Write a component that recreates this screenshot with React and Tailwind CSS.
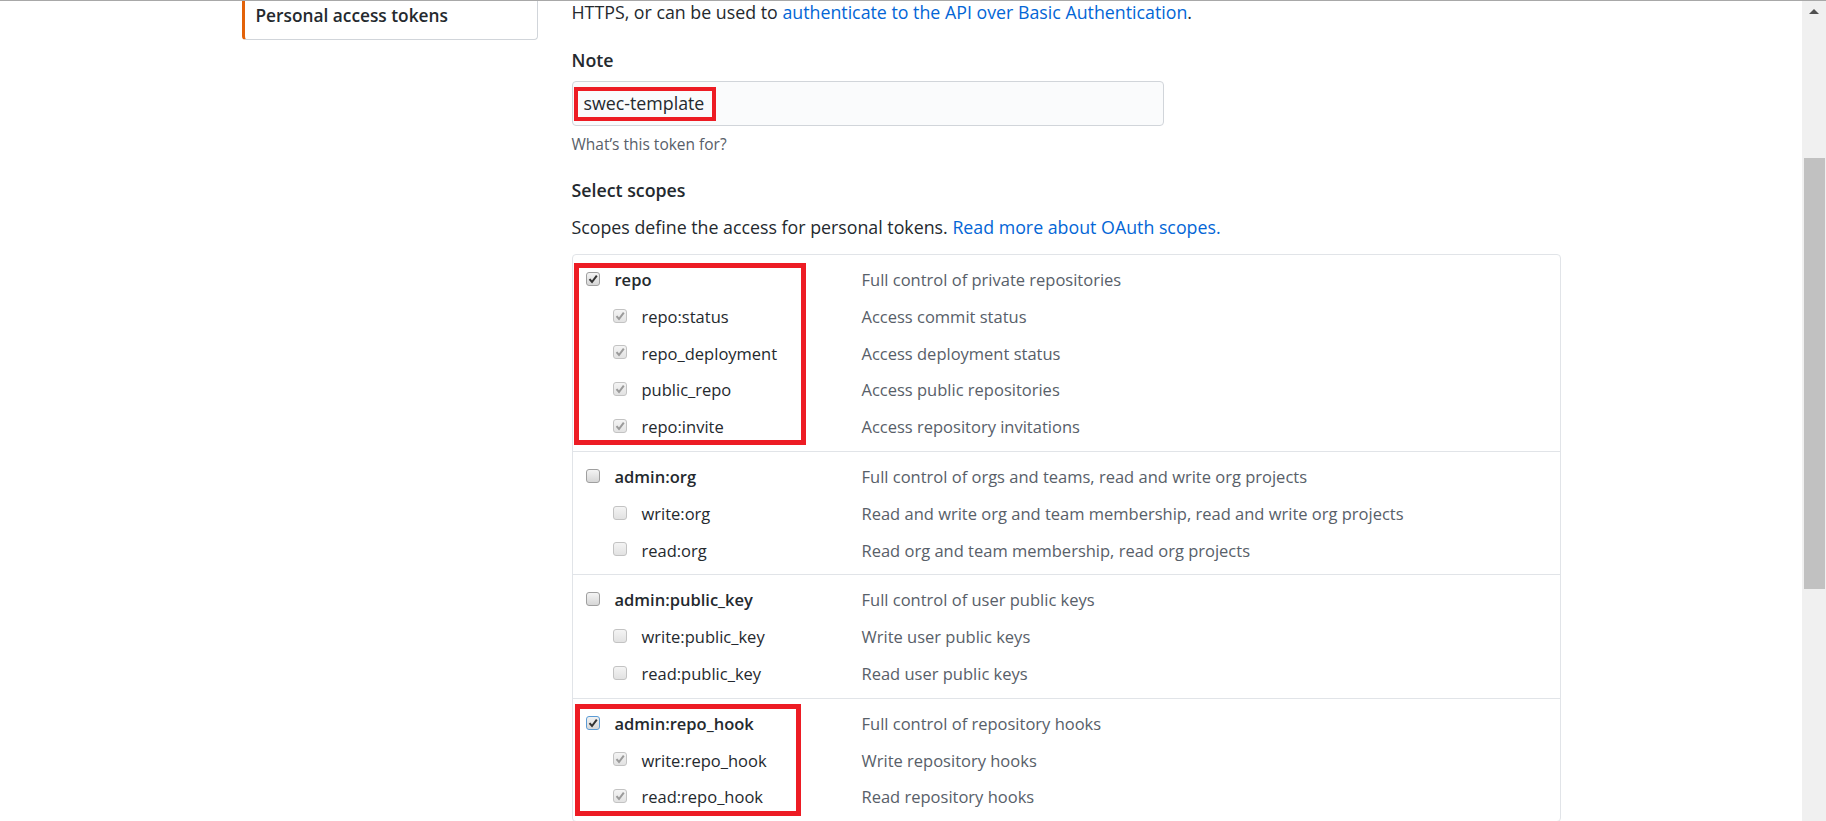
import React from "react";

const groups = [
  {
    checked: true,
    focus: false,
    mark: "top-[8px] left-[1px] w-[232px] h-[182px]",
    parent: { name: "repo", desc: "Full control of private repositories" },
    children: [
      { name: "repo:status", desc: "Access commit status" },
      { name: "repo_deployment", desc: "Access deployment status" },
      { name: "public_repo", desc: "Access public repositories" },
      { name: "repo:invite", desc: "Access repository invitations" },
    ],
  },
  {
    checked: false,
    parent: {
      name: "admin:org",
      desc: "Full control of orgs and teams, read and write org projects",
    },
    children: [
      {
        name: "write:org",
        desc: "Read and write org and team membership, read and write org projects",
      },
      { name: "read:org", desc: "Read org and team membership, read org projects" },
    ],
  },
  {
    checked: false,
    parent: { name: "admin:public_key", desc: "Full control of user public keys" },
    children: [
      { name: "write:public_key", desc: "Write user public keys" },
      { name: "read:public_key", desc: "Read user public keys" },
    ],
  },
  {
    checked: true,
    focus: true,
    mark: "top-[5px] left-[2px] w-[226px] h-[112px]",
    parent: { name: "admin:repo_hook", desc: "Full control of repository hooks" },
    children: [
      { name: "write:repo_hook", desc: "Write repository hooks" },
      { name: "read:repo_hook", desc: "Read repository hooks" },
    ],
  },
];

function Checkbox({ checked, disabled, focus }) {
  return (
    <span
      className={
        "mb-[3px] flex h-[14px] w-[14px] shrink-0 items-center justify-center rounded-[3px] border " +
        (focus
          ? "border-[#5b9bd5] bg-gradient-to-b from-[#f2f2f2] to-[#d8d8d8]"
          : disabled
          ? "border-[#c3c3c3] bg-gradient-to-b from-[#f4f4f4] to-[#e2e2e2]"
          : "border-[#9f9f9f] bg-gradient-to-b from-[#f4f4f4] to-[#d6d6d6]")
      }
    >
      {checked && (
        <svg width="12" height="12" viewBox="0 0 12 12">
          <polyline
            points="2.5,6.2 5,9 9.8,2.6"
            fill="none"
            stroke={disabled ? "#9a9a9a" : "#333"}
            strokeWidth="2"
          />
        </svg>
      )}
    </span>
  );
}

function ScopeRow({ item, child, checked }) {
  return (
    <div className="flex h-[36.8px] items-center">
      <div
        className={
          "flex w-[289px] shrink-0 items-center gap-[15px] " +
          (child ? "pl-[40px]" : "pl-[13px]")
        }
      >
        <Checkbox checked={checked} disabled={child} focus={!child && item.focus} />
        <span className={child ? "text-[#24292e]" : "font-semibold text-[#24292e]"}>
          {item.name}
        </span>
      </div>
      <span className="text-[#586069]">{item.desc}</span>
    </div>
  );
}

export default function App() {
  return (
    <div className="flex h-[821px] overflow-hidden border-t border-[#a8a8a8] bg-white font-['Open_Sans',sans-serif] text-[16.5px] text-[#24292e]">
      <div className="flex-1">
        <div className="mx-auto flex w-[1319px] gap-[34px]">
          {/* settings menu */}
          <div className="w-[296px] shrink-0">
            <div className="h-[39px] rounded-b-[4px] border border-t-0 border-l-[3px] border-[#d1d5da] border-l-[#e36209] pl-[11px] pt-[3px]">
              <span className="text-[17.3px] font-semibold leading-[24px] text-[#24292e]">
                Personal access tokens
              </span>
            </div>
          </div>

          {/* form */}
          <div className="flex-1 text-[17.8px]">
            <p className="-mt-px leading-[24px]">
              HTTPS, or can be used to{" "}
              <a className="text-[#0366d6]">
                authenticate to the API over Basic Authentication
              </a>
              .
            </p>

            <div className="mt-[24px] font-semibold leading-[24px]">Note</div>
            <div className="relative mt-[9px] flex h-[45px] w-[592px] items-center rounded-[4px] border border-[#d1d5da] bg-[#fafbfc] pl-[11px]">
              swec-template
              <div className="absolute left-[1px] top-[5px] h-[34px] w-[142px] border-[4px] border-[#ed1c24]" />
            </div>
            <div className="mt-[8px] text-[15.5px] leading-[20px] text-[#586069]">
              What’s this token for?
            </div>

            <div className="mt-[24px] font-semibold leading-[24px]">Select scopes</div>
            <p className="mt-[13px] leading-[24px]">
              Scopes define the access for personal tokens.{" "}
              <a className="text-[#0366d6]">Read more about OAuth scopes.</a>
            </p>

            <div className="mt-[15px] rounded-[4px] border border-[#e1e4e8] text-[16.5px]">
              {groups.map((g, i) => (
                <div
                  key={g.parent.name}
                  className={
                    "relative pb-[5px] pt-[7px] " + (i > 0 ? "border-t border-[#e1e4e8]" : "")
                  }
                >
                  <ScopeRow item={{ ...g.parent, focus: g.focus }} checked={g.checked} />
                  {g.children.map((c) => (
                    <ScopeRow key={c.name} item={c} child checked={g.checked} />
                  ))}
                  {g.mark && (
                    <div className={"absolute border-[5px] border-[#ed1c24] " + g.mark} />
                  )}
                </div>
              ))}
            </div>
          </div>
        </div>
      </div>

      {/* window scrollbar */}
      <div className="flex w-[24px] shrink-0 flex-col bg-[#f0f0f0]">
        <div className="flex h-[20px] items-center justify-center">
          <div className="h-0 w-0 border-x-[5px] border-b-[5px] border-x-transparent border-b-[#505050]" />
        </div>
        <div className="ml-[2px] mr-px mt-[137px] h-[431px] bg-[#c1c1c1]" />
      </div>
    </div>
  );
}
